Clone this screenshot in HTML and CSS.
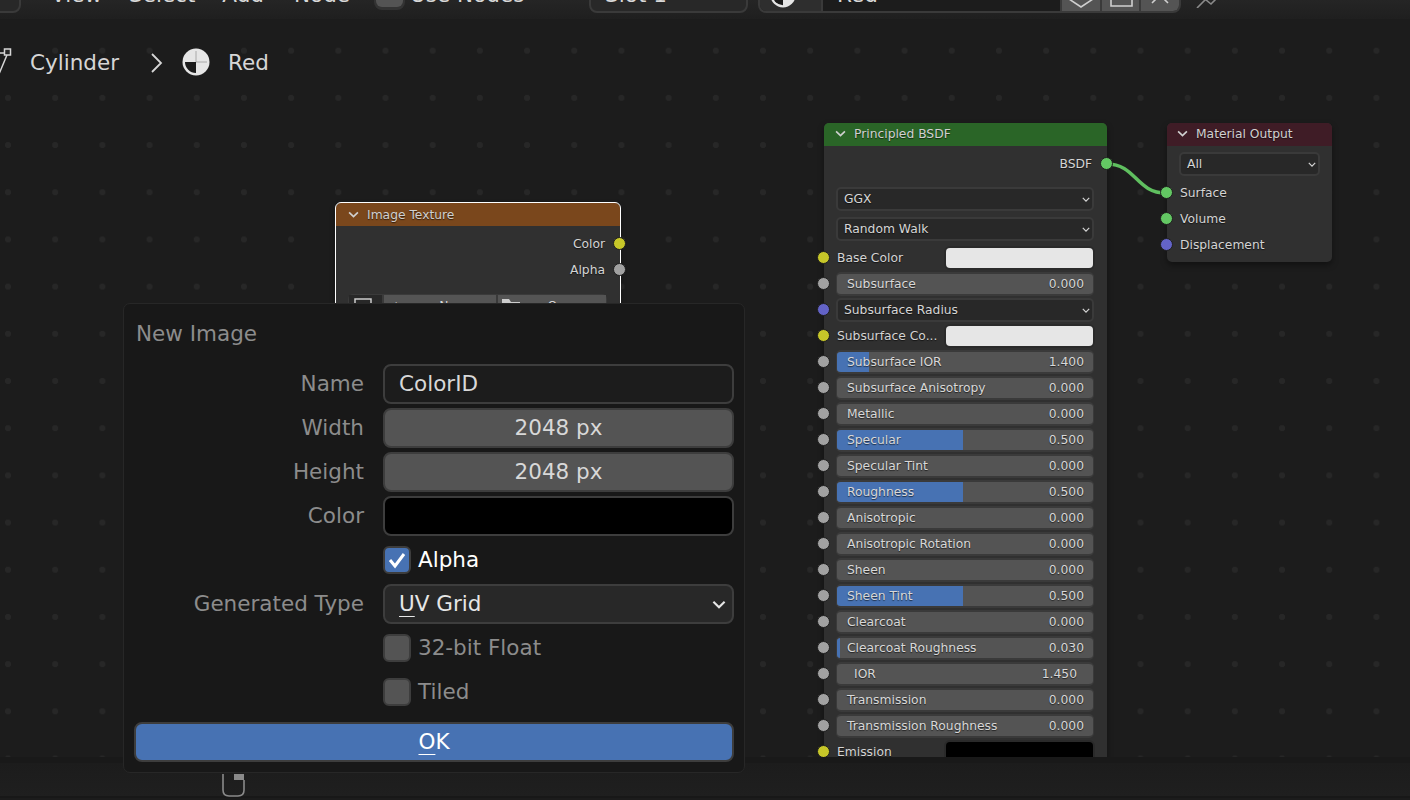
FILE: index.html
```html
<!DOCTYPE html>
<html>
<head>
    <title>Shader Editor</title>
    <link rel="stylesheet" href="styles.css">
</head>
<body>
    <svg class="defs" width="0" height="0">
        <symbol id="chev" viewBox="0 0 10 6">
            <path d="M1 1 L5 5 L9 1" fill="none" stroke="currentColor" stroke-width="1.5"/>
        </symbol>
        <symbol id="mat" viewBox="0 0 28 28">
            <circle cx="14" cy="14" r="13.5" fill="#e6e6e6"/>
            <path d="M14 14 H3 A11 11 0 0 0 14 25 Z" fill="#1c1c1c"/>
            <path d="M14 3 V14 H25" fill="none" stroke="#9a9a9a" stroke-width="0.8"/>
        </symbol>
    </svg>

    <header class="topbar">
        <div class="drop drop-first"></div>
        <nav class="menus">
            <span>View</span>
            <span>Select</span>
            <span>Add</span>
            <span>Node</span>
        </nav>
        <span class="use-check"></span>
        <span class="use-label">Use Nodes</span>
        <div class="drop drop-slot">Slot 1</div>
        <div class="matbox">
            <span class="mat-icon"><svg width="26" height="26"><use href="#mat"/></svg></span>
            <span class="mat-name">Red</span>
            <span class="mat-btn">
                <svg width="24" height="24" viewBox="0 0 24 24"><path d="M0 4 V15 L12 23 L24 15 V4" fill="none" stroke="#cfcfcf" stroke-width="1.6"/></svg>
            </span>
            <span class="mat-btn">
                <svg width="24" height="24" viewBox="0 0 24 24"><path d="M2 2 V22 H23 V2" fill="none" stroke="#cfcfcf" stroke-width="1.6"/></svg>
            </span>
            <span class="mat-btn">
                <svg width="24" height="24" viewBox="0 0 24 24"><path d="M4 19 L12 11 L20 19" fill="none" stroke="#cfcfcf" stroke-width="1.6"/></svg>
            </span>
        </div>
        <svg class="pin" width="24" height="20" viewBox="0 0 24 20">
            <path d="M1 20 L10 11 M10 12 L15 16 L21 10" fill="none" stroke="#8a8a8a" stroke-width="1.6"/>
        </svg>
    </header>

    <main class="canvas">
        <div class="crumbs">
            <svg class="mesh-icon" width="14" height="28" viewBox="0 0 14 28">
                <rect x="6.5" y="1" width="6" height="6" fill="none" stroke="#d6d6d6" stroke-width="1.5"/>
                <path d="M0 5 H6.5 M9 7 L1 26" fill="none" stroke="#d6d6d6" stroke-width="1.5"/>
            </svg>
            <span class="crumb-text">Cylinder</span>
            <svg class="crumb-sep" width="14" height="22" viewBox="0 0 14 22"><path d="M2 2 L11 11 L2 20" fill="none" stroke="#d6d6d6" stroke-width="1.8"/></svg>
            <svg width="28" height="28"><use href="#mat"/></svg>
            <span class="crumb-text">Red</span>
        </div>

        <svg class="noodle" width="70" height="40" viewBox="0 0 70 40">
            <path d="M1 2 C 30 2, 30 31, 60 31" fill="none" stroke="#5fbf5f" stroke-width="3.5"/>
        </svg>

        <section class="node node-image">
            <div class="node-head head-orange"><svg class="head-chev" width="11" height="7"><use href="#chev"/></svg>Image Texture</div>
            <div class="node-body">
                <div class="row row-out"><span>Color</span><i class="sock sock-out yellow"></i></div>
                <div class="row row-out"><span>Alpha</span><i class="sock sock-out grey"></i></div>
                <div class="img-btns">
                    <span class="img-pick"><svg width="18" height="18" viewBox="0 0 18 18"><rect x="1" y="1" width="16" height="16" fill="none" stroke="#ccc" stroke-width="1.5"/></svg></span>
                    <span class="img-btn img-new"><span>+</span><span>New</span></span>
                    <span class="img-btn">
                        <svg width="18" height="14" viewBox="0 0 18 14"><path d="M0 0 H7 L9 3 H18 V14 H0 Z" fill="#ccc"/></svg>
                        <span>Open</span>
                    </span>
                </div>
            </div>
        </section>

        <section class="node node-bsdf">
            <div class="node-head head-green"><svg class="head-chev" width="11" height="7"><use href="#chev"/></svg>Principled BSDF</div>
            <div class="node-body">
                <div class="row row-out"><span>BSDF</span><i class="sock sock-out green"></i></div>
                <div class="row row-ggx"><div class="select">GGX<svg width="8" height="5"><use href="#chev"/></svg></div></div>
                <div class="row row-walk"><div class="select">Random Walk<svg width="8" height="5"><use href="#chev"/></svg></div></div>
                <div class="row row-base"><i class="sock yellow"></i><span class="in-label">Base Color</span><span class="swatch"></span></div>
                <div class="row"><i class="sock grey"></i><div class="slider"><span>Subsurface</span><span>0.000</span></div></div>
                <div class="row"><i class="sock blue"></i><div class="select">Subsurface Radius<svg width="8" height="5"><use href="#chev"/></svg></div></div>
                <div class="row"><i class="sock yellow"></i><span class="in-label">Subsurface Co...</span><span class="swatch"></span></div>
                <div class="row"><i class="sock grey"></i><div class="slider"><b class="fill" style="width:12.5%"></b><span>Subsurface IOR</span><span>1.400</span></div></div>
                <div class="row"><i class="sock grey"></i><div class="slider"><span>Subsurface Anisotropy</span><span>0.000</span></div></div>
                <div class="row"><i class="sock grey"></i><div class="slider"><span>Metallic</span><span>0.000</span></div></div>
                <div class="row"><i class="sock grey"></i><div class="slider"><b class="fill" style="width:49.2%"></b><span>Specular</span><span>0.500</span></div></div>
                <div class="row"><i class="sock grey"></i><div class="slider"><span>Specular Tint</span><span>0.000</span></div></div>
                <div class="row"><i class="sock grey"></i><div class="slider"><b class="fill" style="width:49.2%"></b><span>Roughness</span><span>0.500</span></div></div>
                <div class="row"><i class="sock grey"></i><div class="slider"><span>Anisotropic</span><span>0.000</span></div></div>
                <div class="row"><i class="sock grey"></i><div class="slider"><span>Anisotropic Rotation</span><span>0.000</span></div></div>
                <div class="row"><i class="sock grey"></i><div class="slider"><span>Sheen</span><span>0.000</span></div></div>
                <div class="row"><i class="sock grey"></i><div class="slider"><b class="fill" style="width:49.2%"></b><span>Sheen Tint</span><span>0.500</span></div></div>
                <div class="row"><i class="sock grey"></i><div class="slider"><span>Clearcoat</span><span>0.000</span></div></div>
                <div class="row"><i class="sock grey"></i><div class="slider"><b class="fill" style="width:1.2%"></b><span>Clearcoat Roughness</span><span>0.030</span></div></div>
                <div class="row"><i class="sock grey"></i><div class="slider slider-wide"><span>IOR</span><span>1.450</span></div></div>
                <div class="row"><i class="sock grey"></i><div class="slider"><span>Transmission</span><span>0.000</span></div></div>
                <div class="row"><i class="sock grey"></i><div class="slider"><span>Transmission Roughness</span><span>0.000</span></div></div>
                <div class="row"><i class="sock yellow"></i><span class="in-label">Emission</span><span class="swatch swatch-black"></span></div>
            </div>
        </section>

        <section class="node node-output">
            <div class="node-head head-maroon"><svg class="head-chev" width="11" height="7"><use href="#chev"/></svg>Material Output</div>
            <div class="node-body">
                <div class="row row-all"><div class="select">All<svg width="8" height="5"><use href="#chev"/></svg></div></div>
                <div class="row"><i class="sock green"></i><span class="out-label">Surface</span></div>
                <div class="row"><i class="sock green"></i><span class="out-label">Volume</span></div>
                <div class="row"><i class="sock blue"></i><span class="out-label">Displacement</span></div>
            </div>
        </section>
    </main>

    <div class="band"></div>
    <footer class="bottombar">
        <svg width="24" height="26" viewBox="0 0 24 26">
            <path d="M1 2 V18 Q1 24 7 24 H16 Q22 24 22 18 V8" fill="none" stroke="#8a8a8a" stroke-width="1.6"/>
            <rect x="12" y="2" width="10" height="6" fill="#8a8a8a"/>
        </svg>
    </footer>

    <div class="dialog">
        <h2 class="dialog-title">New Image</h2>
        <div class="form">
            <label>Name</label>
            <div class="field field-text">ColorID</div>
            <label>Width</label>
            <div class="field field-num">2048 px</div>
            <label>Height</label>
            <div class="field field-num">2048 px</div>
            <label>Color</label>
            <div class="field field-black"></div>
            <label></label>
            <div class="check"><span class="box box-on">
                <svg width="20" height="18" viewBox="0 0 20 18"><path d="M3 9 L8 15 L17 3" fill="none" stroke="#fff" stroke-width="3"/></svg>
            </span><span class="check-text">Alpha</span></div>
            <label>Generated Type</label>
            <div class="field field-select"><span><u>U</u>V Grid</span><svg width="14" height="9"><use href="#chev"/></svg></div>
            <label></label>
            <div class="check check-off"><span class="box"></span><span class="check-text">32-bit Float</span></div>
            <label></label>
            <div class="check check-off"><span class="box"></span><span class="check-text">Tiled</span></div>
        </div>
        <button class="ok"><u>O</u>K</button>
    </div>
</body>
</html>
```

FILE: styles.css
```css
body {
    margin: 0;
    width: 1410px;
    height: 800px;
    overflow: hidden;
    position: relative;
    display: flex;
    flex-direction: column;
    background-color: #1c1c1c;
    font-family: "DejaVu Sans", sans-serif;
    color: #d4d4d4;
}

.defs {
    position: absolute;
}

/* top header, cut off by the window edge */
.topbar {
    height: 19px;
    flex-shrink: 0;
    display: flex;
    align-items: flex-end;
    overflow: hidden;
    background: linear-gradient(#252525, #1f1f1f);
    font-size: 21.5px;
    color: #d8d8d8;
}

.drop {
    height: 40px;
    margin-bottom: 6px;
    box-sizing: border-box;
    background-color: #282828;
    border: 2px solid #3a3a3a;
    border-radius: 8px;
    line-height: 40px;
}

.drop-first {
    width: 40px;
    margin-left: -19px;
}

.menus {
    display: flex;
    gap: 27px;
    margin-left: 30px;
    margin-bottom: 4px;
    line-height: 40px;
    flex-shrink: 0;
}

.menus span:last-child {
    margin-left: 3px;
}

.use-check {
    width: 27px;
    height: 28px;
    margin-left: 26px;
    margin-bottom: 12px;
    border-radius: 6px;
    background-color: #545454;
    box-shadow: 0 1px 0 2px #333;
    flex-shrink: 0;
}

.use-label {
    width: 112px;
    margin-left: 7px;
    margin-bottom: 4px;
    line-height: 40px;
    white-space: nowrap;
    flex-shrink: 0;
}

.drop-slot {
    width: 159px;
    margin-left: 67px;
    padding-left: 14px;
    flex-shrink: 0;
}

.matbox {
    width: 423px;
    height: 40px;
    margin-left: 10px;
    margin-bottom: 6px;
    box-sizing: border-box;
    display: flex;
    border: 2px solid #3a3a3a;
    border-radius: 8px;
    overflow: hidden;
    flex-shrink: 0;
}

.mat-icon {
    width: 63px;
    background-color: #2e2e2e;
    border-right: 2px solid #3a3a3a;
    padding: 7px 0 0 10px;
    box-sizing: border-box;
    flex-shrink: 0;
}

.mat-name {
    width: 223px;
    padding-left: 14px;
    background-color: #1c1c1c;
    line-height: 40px;
    flex-shrink: 0;
}

.mat-btn {
    flex: 1;
    background-color: #545454;
    border-left: 2px solid #3a3a3a;
    display: flex;
    justify-content: center;
    align-items: flex-end;
    padding-bottom: 3px;
}

.pin {
    margin-left: 15px;
    margin-bottom: 11px;
    flex-shrink: 0;
}

/* node editor area */
.canvas {
    position: relative;
    height: 738px;
    flex-shrink: 0;
    overflow: hidden;
    background-color: #1c1c1c;
    background-image: radial-gradient(circle, #272727 2.8px, transparent 3.2px);
    background-size: 47.2px 47.2px;
    background-position: -15.6px 8.1px;
}

.crumbs {
    display: flex;
    align-items: center;
    height: 28px;
    padding-top: 29px;
    margin-left: -2px;
    font-size: 21.5px;
}

.crumb-text {
    margin: 0 0 0 18px;
    color: #d6d6d6;
}

.crumb-sep {
    margin: 2px 18px 0 31px;
}

.noodle {
    position: absolute;
    left: 1106px;
    top: 143px;
}

.node {
    position: absolute;
    box-sizing: border-box;
    background-color: #303030;
    border-radius: 5px;
    font-size: 12.3px;
    box-shadow: 0 3px 6px rgba(0, 0, 0, 0.4);
    text-shadow: 0 1px 1px rgba(0, 0, 0, 0.6);
}

.node-image {
    left: 336px;
    top: 184px;
    width: 284px;
    height: 220px;
    outline: 1px solid #fff;
}

.node-bsdf {
    left: 824px;
    top: 104px;
    width: 283px;
    height: 800px;
}

.node-output {
    left: 1167px;
    top: 104px;
    width: 165px;
    height: 139px;
}

.node-head {
    height: 23px;
    box-sizing: border-box;
    padding-left: 11px;
    border-radius: 5px 5px 0 0;
    color: #d0d0d0;
    display: flex;
    align-items: center;
}

.node-bsdf .node-head, .node-output .node-head {
    padding-bottom: 2px;
}

.node-image .node-head {
    padding-left: 12px;
}

.node-output .node-head {
    padding-left: 10px;
}

.head-chev {
    margin-right: 8px;
}

.head-orange { background-color: #7a471c; }
.head-green { background-color: #2a6527; }
.head-maroon { background-color: #3f1c26; }

.node-body {
    padding: 5px 13px 0 12px;
}

.row {
    position: relative;
    height: 26px;
    display: flex;
    align-items: center;
}

.row-out {
    justify-content: flex-end;
    padding-right: 2px;
    color: #d4d4d4;
}

.row-ggx { margin-top: 9px; }
.row-walk { margin-top: 4px; }
.row-base { margin-top: 3px; }
.row-all { margin-bottom: 3px; }

.sock {
    position: absolute;
    left: -19.5px;
    top: 5.5px;
    width: 11px;
    height: 11px;
    border-radius: 50%;
    border: 1px solid #1e1e1e;
}

.sock-out {
    left: auto;
    right: -19px;
}

.node-image .sock-out {
    right: -18.5px;
}

.yellow { background-color: #c7c729; }
.grey { background-color: #a1a1a1; }
.green { background-color: #63c763; }
.blue { background-color: #6363c7; }

.node-output .node-body {
    padding-left: 12px;
    padding-right: 12px;
}

.img-btns {
    display: flex;
    gap: 2px;
    height: 26px;
    margin-top: 11px;
    box-sizing: border-box;
    padding: 1px;
    background-color: #3a3a3a;
    border-radius: 5px;
}

.img-pick {
    width: 33px;
    background-color: #282828;
    padding: 3px 0 0 5px;
    box-sizing: border-box;
    flex-shrink: 0;
}

.img-btn {
    flex: 1;
    display: flex;
    align-items: center;
    gap: 28px;
    padding: 0 0 2px 4px;
    background-color: #545454;
    color: #d8d8d8;
}

.img-new {
    gap: 38px;
    padding-left: 7px;
}

.select {
    flex: 1;
    height: 24px;
    box-sizing: border-box;
    padding: 0 2px 0 6px;
    display: flex;
    justify-content: space-between;
    align-items: center;
    background-color: #282828;
    border: 2px solid #3a3a3a;
    border-radius: 5px;
    color: #d6d6d6;
}

.slider {
    flex: 1;
    position: relative;
    height: 24px;
    box-sizing: border-box;
    padding: 0 9px 0 10px;
    display: flex;
    justify-content: space-between;
    align-items: center;
    background-color: #545454;
    border: solid #3a3a3a;
    border-width: 2px 1px;
    border-radius: 5px;
    overflow: hidden;
    color: #d8d8d8;
}

.slider span {
    position: relative;
}

.slider-wide {
    padding: 0 16px 0 17px;
}

.fill {
    position: absolute;
    left: 0;
    top: 0;
    bottom: 0;
    background-color: #4772b3;
}

.in-label {
    width: 108px;
    margin-left: 1px;
    white-space: nowrap;
}

.out-label {
    margin-left: 1px;
}

.swatch {
    width: 147px;
    height: 20px;
    margin-left: 1px;
    background-color: #e6e6e6;
    border-radius: 4px;
    box-shadow: 0 0 0 2px #2a2a2a;
}

.swatch-black {
    background-color: #000;
}

.band {
    height: 6px;
    flex-shrink: 0;
    background-color: #191919;
}

.bottombar {
    height: 35px;
    flex-shrink: 0;
    padding: 9px 0 0 222px;
    box-sizing: border-box;
    background: linear-gradient(#1c1c1c, #1f1f1f);
    border-bottom: 2px solid #181818;
}

/* floating operator dialog */
.dialog {
    position: absolute;
    left: 123px;
    top: 303px;
    width: 622px;
    height: 470px;
    box-sizing: border-box;
    padding: 0 11px;
    background-color: #181818;
    border: 1px solid #272727;
    border-radius: 7px;
    font-size: 21.5px;
}

.dialog-title {
    margin: 0;
    height: 60px;
    padding: 17px 0 0 1px;
    box-sizing: border-box;
    font-size: 21.5px;
    font-weight: normal;
    line-height: 26px;
    color: #8c8c8c;
}

.form {
    display: grid;
    grid-template-columns: 229px 351px;
    column-gap: 19px;
    grid-auto-rows: 40px;
    row-gap: 4px;
}

.form label {
    line-height: 40px;
    text-align: right;
    color: #8c8c8c;
    white-space: nowrap;
}

.field {
    box-sizing: border-box;
    border: 2px solid #3d3d3d;
    border-radius: 8px;
    line-height: 36px;
    color: #d8d8d8;
}

.field-text {
    padding-left: 14px;
    background-color: #1c1c1c;
}

.field-num {
    text-align: center;
    background-color: #545454;
}

.field-black {
    background-color: #000;
}

.field-select {
    padding: 0 6px 0 14px;
    display: flex;
    justify-content: space-between;
    align-items: center;
    background-color: #282828;
    color: #e6e6e6;
}

.field-select u, .ok u {
    text-underline-offset: 5px;
    text-decoration-thickness: 1px;
}

.check {
    display: flex;
    align-items: center;
    gap: 7px;
    color: #fff;
}

.check-text {
    margin-top: -2px;
}

.check-off {
    color: #8c8c8c;
}

.box {
    width: 28px;
    height: 28px;
    box-sizing: border-box;
    display: flex;
    align-items: center;
    justify-content: center;
    background-color: #545454;
    border: 2px solid #3d3d3d;
    border-radius: 6px;
}

.box-on {
    background-color: #4772b3;
}

.ok {
    display: block;
    width: 600px;
    height: 40px;
    margin: 10px 0 0 -1px;
    padding: 0 0 2px;
    box-sizing: border-box;
    background-color: #4772b3;
    border: 2px solid #3d3d3d;
    border-radius: 8px;
    font-family: inherit;
    font-size: 21.5px;
    color: #fff;
}
```
